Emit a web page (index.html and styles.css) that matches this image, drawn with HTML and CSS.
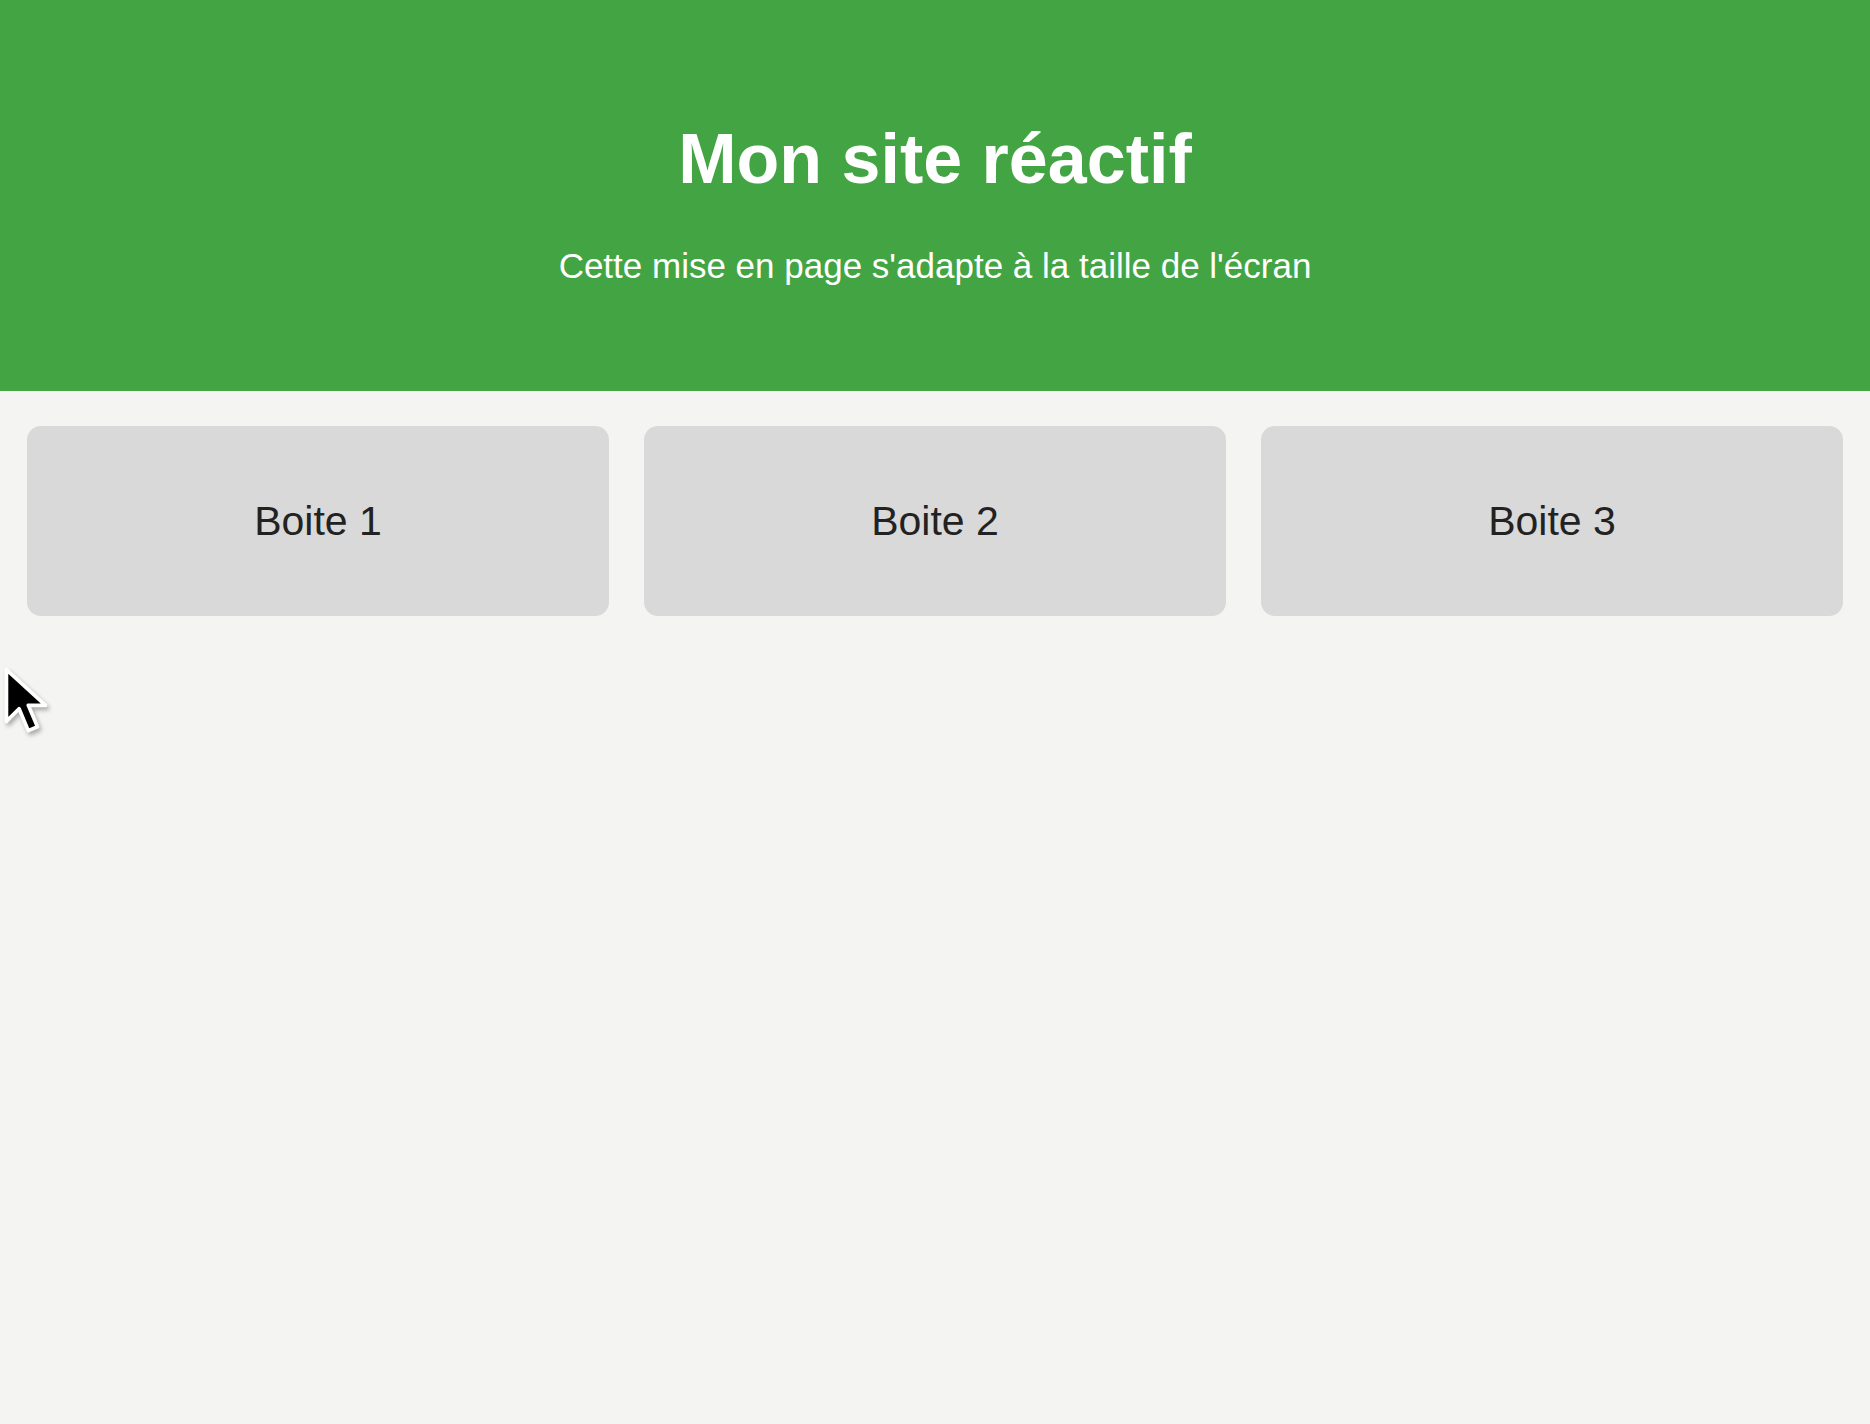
FILE: index.html
```html
<!DOCTYPE html>
<html lang="fr">
<head>
  <meta charset="UTF-8">
  <title>Mon site réactif</title>
  <link rel="stylesheet" href="styles.css">
</head>
<body>

  <!-- En-tete -->
  <header class="header">
    <h1>Mon site réactif</h1>
    <p>Cette mise en page s'adapte à la taille de l'écran</p>
  </header>

  <!-- Boites -->
  <main class="container">
    <div class="box">Boite 1</div>
    <div class="box">Boite 2</div>
    <div class="box">Boite 3</div>
  </main>

  <!-- pointeur de la souris -->
  <svg class="cursor" width="46" height="74" viewBox="0 0 20 32">
    <path d="M1.5 1.5 L1.5 24 L7 18.5 L11 28 L15 26.3 L11 17 L18.5 17 Z" fill="#000" stroke="#fff" stroke-width="1.6" stroke-linejoin="round"/>
  </svg>

</body>
</html>
```

FILE: styles.css
```css
body {
  margin: 0;
  background-color: #f4f4f2;
  font-family: 'Liberation Sans', Helvetica, Arial, sans-serif;
  color: #222;
  min-height: 100vh;
}

.header {
  background-color: #43a443;
  color: white;
  text-align: center;
  padding: 120px 20px 106px;
}

.header h1 {
  margin: 0;
  font-size: 70px;
  font-weight: bold;
  line-height: 78px;
}

.header p {
  margin: 48px 0 0;
  font-size: 35px;
  line-height: 39px;
}

.container {
  display: grid;
  grid-template-columns: repeat(3, 1fr);
  gap: 35px;
  padding: 35px 27px;
}

.box {
  height: 190px;
  background: #d9d9d9;
  border-radius: 14px;
  display: flex;
  justify-content: center;
  align-items: center;
  font-size: 41px;
  color: #222;
}

.cursor {
  position: absolute;
  left: 3px;
  top: 666px;
  filter: drop-shadow(2px 3px 2px rgba(0, 0, 0, 0.3));
}
```
